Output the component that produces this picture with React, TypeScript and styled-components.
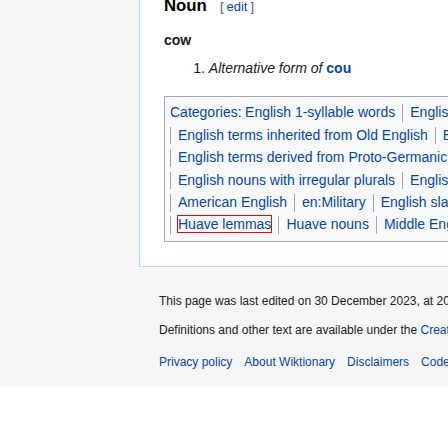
import React from "react";
import styled, { createGlobalStyle } from "styled-components";

const Global = createGlobalStyle`
  html, body { margin: 0; padding: 0; background: #ffffff; }
  body { font-family: "Liberation Sans", Arial, sans-serif; color: #202122; overflow: hidden; }
  a { text-decoration: none; color: #0645ad; }
`;

const Page = styled.div`
  width: 448px;
  overflow: hidden;
  background: #f6f6f6;
`;

const Top = styled.div`
  display: flex;
`;

const Sidebar = styled.div`
  flex: 0 0 139px;
`;

const Panel = styled.main`
  flex: 0 0 auto;
  width: 900px;
  background: #ffffff;
  border-left: 1px solid #a7d7f9;
  border-bottom: 1px solid #a7d7f9;
  padding: 0 24px 24px 24px;
`;

const Heading = styled.h4`
  margin: -4px 0 0 0;
  font-size: 16.8px;
  line-height: 20px;
  font-weight: bold;
  color: #000;
  display: flex;
  align-items: baseline;
`;

const EditSection = styled.span`
  margin-left: 13px;
  font-size: 13px;
  font-weight: normal;
  color: #54595d;
  a { margin: 0 3px; }
`;

const Headword = styled.p`
  margin: 12px 0 0 0;
  font-size: 14px;
  line-height: 22.4px;
  font-weight: bold;
`;

const Senses = styled.ol`
  margin: 5.6px 0 0 0;
  padding-left: 44.8px;
  font-size: 14px;
  line-height: 22.4px;
  em { font-style: italic; }
  b a { font-weight: bold; }
`;

const CatBox = styled.div`
  margin-top: 16.6px;
  border: 1px solid #a2a9b1;
  background: #f8f9fa;
  padding: 5px;
  font-size: 14px;
`;

const CatLine = styled.ul`
  display: flex;
  align-items: center;
  height: 22.4px;
  margin: 0;
  padding: 0;
  list-style: none;
  white-space: nowrap;
`;

const CatLabel = styled.span`
  line-height: 17.5px;
`;

const CatItem = styled.li<{ $first?: boolean; $focused?: boolean }>`
  line-height: 17.5px;
  border-left: ${(p) => (p.$first ? "none" : "1px solid #a2a9b1")};
  padding: ${(p) => (p.$first ? "0 7px 0 3.5px" : "0 7px")};
  a {
    outline: ${(p) => (p.$focused ? "1px solid #ff0000" : "none")};
    outline-offset: 0;
  }
`;

const Footer = styled.footer`
  padding: 26px 0 17px 20px;
  margin-left: 139px;
  font-size: 12px;
  white-space: nowrap;
`;

const FooterRow = styled.div<{ $gap: number }>`
  line-height: 16px;
  margin-top: ${(p) => p.$gap}px;
`;

const FooterLinks = styled.ul<{ $gap: number }>`
  display: flex;
  gap: 12px;
  margin: ${(p) => p.$gap}px 0 0 0;
  padding: 0;
  list-style: none;
  line-height: 16px;
`;

const lines: { items: string[]; label?: boolean; focus?: number }[] = [
  { label: true, items: ["English 1-syllable words", "English lemmas", "English nouns"] },
  { items: ["English terms inherited from Old English", "English terms inherited from Proto-Germanic"] },
  { items: ["English terms derived from Proto-Germanic", "English terms with IPA"] },
  { items: ["English nouns with irregular plurals", "English countable nouns"] },
  { items: ["American English", "en:Military", "English slang"] },
  { items: ["Huave lemmas", "Huave nouns", "Middle English lemmas"], focus: 0 },
];

export default function App() {
  return (
    <>
      <Global />
      <Page>
        <Top>
          <Sidebar />
          <Panel>
            <Heading>
              Noun
              <EditSection>
                [<a href="#">edit</a>]
              </EditSection>
            </Heading>
            <Headword>cow</Headword>
            <Senses>
              <li>
                <em>Alternative form of</em> <b><a href="#">cou</a></b>
              </li>
            </Senses>
            <CatBox>
              {lines.map((line, i) => (
                <CatLine key={i}>
                  {line.label && (
                    <CatLabel>
                      <a href="#">Categories</a>:
                    </CatLabel>
                  )}
                  {line.items.map((it, j) => (
                    <CatItem key={j} $first={line.label && j === 0} $focused={line.focus === j}>
                      <a href="#">{it}</a>
                    </CatItem>
                  ))}
                </CatLine>
              ))}
            </CatBox>
          </Panel>
        </Top>
        <Footer>
          <FooterRow $gap={0}>
            This page was last edited on 30 December 2023, at 20:14.
          </FooterRow>
          <FooterRow $gap={13}>
            Definitions and other text are available under the <a href="#">Creative Commons Attribution-ShareAlike License</a>
          </FooterRow>
          <FooterLinks $gap={16}>
            <li><a href="#">Privacy policy</a></li>
            <li><a href="#">About Wiktionary</a></li>
            <li><a href="#">Disclaimers</a></li>
            <li><a href="#">Code of Conduct</a></li>
          </FooterLinks>
        </Footer>
      </Page>
    </>
  );
}
